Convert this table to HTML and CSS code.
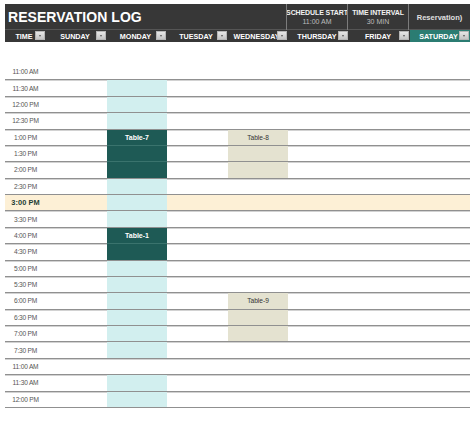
FILE: index.html
```html
<!DOCTYPE html>
<html>
<head>
<meta charset="utf-8">
<link rel="stylesheet" href="styles.css">
</head>
<body>
<div class="sheet">
  <div class="titlebar">
    <div class="title">RESERVATION LOG</div>
    <div class="meta"><span class="meta-k">SCHEDULE START</span><span class="meta-v">11:00 AM</span></div>
    <div class="meta"><span class="meta-k">TIME INTERVAL</span><span class="meta-v">30 MIN</span></div>
    <div class="meta"><span class="meta-r">Reservation)</span></div>
  </div>
  <div class="dayrow">
    <div class="day"><span>TIME</span><i class="dd"></i></div>
    <div class="day"><span>SUNDAY</span><i class="dd"></i></div>
    <div class="day"><span>MONDAY</span><i class="dd"></i></div>
    <div class="day"><span>TUESDAY</span><i class="dd"></i></div>
    <div class="day"><span>WEDNESDAY</span><i class="dd"></i></div>
    <div class="day"><span>THURSDAY</span><i class="dd"></i></div>
    <div class="day"><span>FRIDAY</span><i class="dd"></i></div>
    <div class="day sat"><span>SATURDAY</span><i class="dd"></i></div>
  </div>

  <div class="grid">
    <div class="row"><div class="t">11:00 AM</div><div></div><div></div><div></div><div></div><div></div><div></div><div></div></div>
    <div class="row"><div class="t">11:30 AM</div><div></div><div class="cy"></div><div></div><div></div><div></div><div></div><div></div></div>
    <div class="row"><div class="t">12:00 PM</div><div></div><div class="cy"></div><div></div><div></div><div></div><div></div><div></div></div>
    <div class="row"><div class="t">12:30 PM</div><div></div><div class="cy"></div><div></div><div></div><div></div><div></div><div></div></div>
    <div class="row"><div class="t">1:00 PM</div><div></div><div class="dk cont">Table-7</div><div></div><div class="bg">Table-8</div><div></div><div></div><div></div></div>
    <div class="row"><div class="t">1:30 PM</div><div></div><div class="dk cont"></div><div></div><div class="bg"></div><div></div><div></div><div></div></div>
    <div class="row"><div class="t">2:00 PM</div><div></div><div class="dk"></div><div></div><div class="bg"></div><div></div><div></div><div></div></div>
    <div class="row"><div class="t">2:30 PM</div><div></div><div class="cy"></div><div></div><div></div><div></div><div></div><div></div></div>
    <div class="row now"><div class="t">3:00 PM</div><div></div><div class="cy"></div><div></div><div></div><div></div><div></div><div></div></div>
    <div class="row"><div class="t">3:30 PM</div><div></div><div class="cy"></div><div></div><div></div><div></div><div></div><div></div></div>
    <div class="row"><div class="t">4:00 PM</div><div></div><div class="dk cont">Table-1</div><div></div><div></div><div></div><div></div><div></div></div>
    <div class="row"><div class="t">4:30 PM</div><div></div><div class="dk"></div><div></div><div></div><div></div><div></div><div></div></div>
    <div class="row"><div class="t">5:00 PM</div><div></div><div class="cy"></div><div></div><div></div><div></div><div></div><div></div></div>
    <div class="row"><div class="t">5:30 PM</div><div></div><div class="cy"></div><div></div><div></div><div></div><div></div><div></div></div>
    <div class="row"><div class="t">6:00 PM</div><div></div><div class="cy"></div><div></div><div class="bg">Table-9</div><div></div><div></div><div></div></div>
    <div class="row"><div class="t">6:30 PM</div><div></div><div class="cy"></div><div></div><div class="bg"></div><div></div><div></div><div></div></div>
    <div class="row"><div class="t">7:00 PM</div><div></div><div class="cy"></div><div></div><div class="bg"></div><div></div><div></div><div></div></div>
    <div class="row"><div class="t">7:30 PM</div><div></div><div class="cy"></div><div></div><div></div><div></div><div></div><div></div></div>
    <div class="row"><div class="t">11:00 AM</div><div></div><div></div><div></div><div></div><div></div><div></div><div></div></div>
    <div class="row"><div class="t">11:30 AM</div><div></div><div class="cy"></div><div></div><div></div><div></div><div></div><div></div></div>
    <div class="row"><div class="t">12:00 PM</div><div></div><div class="cy"></div><div></div><div></div><div></div><div></div><div></div></div>
  </div>
</div>
</body>
</html>
```

FILE: styles.css
```css
* { box-sizing: border-box; }
html, body { margin: 0; padding: 0; background: #fff; }
body { font-family: "Liberation Sans", Arial, sans-serif; }

.sheet {
  width: 465px;
  margin: 4px 0 0 5px;
}

.titlebar {
  display: grid;
  grid-template-columns: 281px 61px 61px 62px;
  height: 26px;
  background: #373737;
  border-bottom: 1px solid #555;
}
.title {
  color: #fff;
  font-weight: bold;
  font-size: 14px;
  line-height: 26px;
  padding-left: 3px;
  letter-spacing: 0.05px;
}
.meta {
  border-left: 1px solid #7c7c7c;
  display: flex;
  flex-direction: column;
  align-items: center;
  justify-content: center;
  overflow: hidden;
  white-space: nowrap;
}
.meta-k {
  color: #f2f2f2;
  font-weight: bold;
  font-size: 7px;
  line-height: 9px;
  letter-spacing: -0.1px;
}
.meta-v {
  color: #bdbdbd;
  font-size: 7px;
  line-height: 9px;
}
.meta-r {
  color: #e0e0e0;
  font-weight: bold;
  font-size: 7.5px;
}

.dayrow {
  display: grid;
  grid-template-columns: 41px 61px 60px 61px 60px 61px 61px 60px;
  height: 12px;
  background: #373737;
}
.day {
  position: relative;
  display: flex;
  justify-content: center;
  align-items: center;
  overflow: hidden;
  white-space: nowrap;
  padding-right: 3px;
  color: #fff;
  font-weight: bold;
  font-size: 7.2px;
}
.day.sat { background: #2b7c72; }
.dd {
  position: absolute;
  right: 1px;
  top: 1px;
  width: 10px;
  height: 9px;
  background: linear-gradient(#e6e6e6, #c4c4c4);
  border: 1px solid #b5b5b5;
}
.dd::after {
  content: "";
  position: absolute;
  left: 3px;
  top: 3px;
  border-left: 1.5px solid transparent;
  border-right: 1.5px solid transparent;
  border-top: 2px solid #555;
}

.grid { margin-top: 22px; }
.row {
  display: grid;
  grid-template-columns: 41px 61px 60px 61px 60px 61px 61px 60px;
  height: 16.38px;
  border-bottom: 1px solid #909090;
  box-shadow: 0 1px 0 #d2d2d2;
}
.row > div {
  display: flex;
  align-items: center;
  justify-content: center;
  font-size: 6.6px;
  white-space: nowrap;
}
.t { color: #555; letter-spacing: -0.2px; }
.now { background: #fdf0d6; }
.now .t { color: #1d3d33; font-weight: bold; font-size: 7.4px; letter-spacing: 0.1px; }
.cy { background: #d2efef; }
.dk {
  background: #1e5a55;
  color: #fff;
  font-weight: bold;
  font-size: 7px !important;
}
.dk.cont {
  margin-bottom: -1px;
  border-bottom: 1px solid #3a736d;
}
.bg { background: #e4e2d0; color: #333; }
```
